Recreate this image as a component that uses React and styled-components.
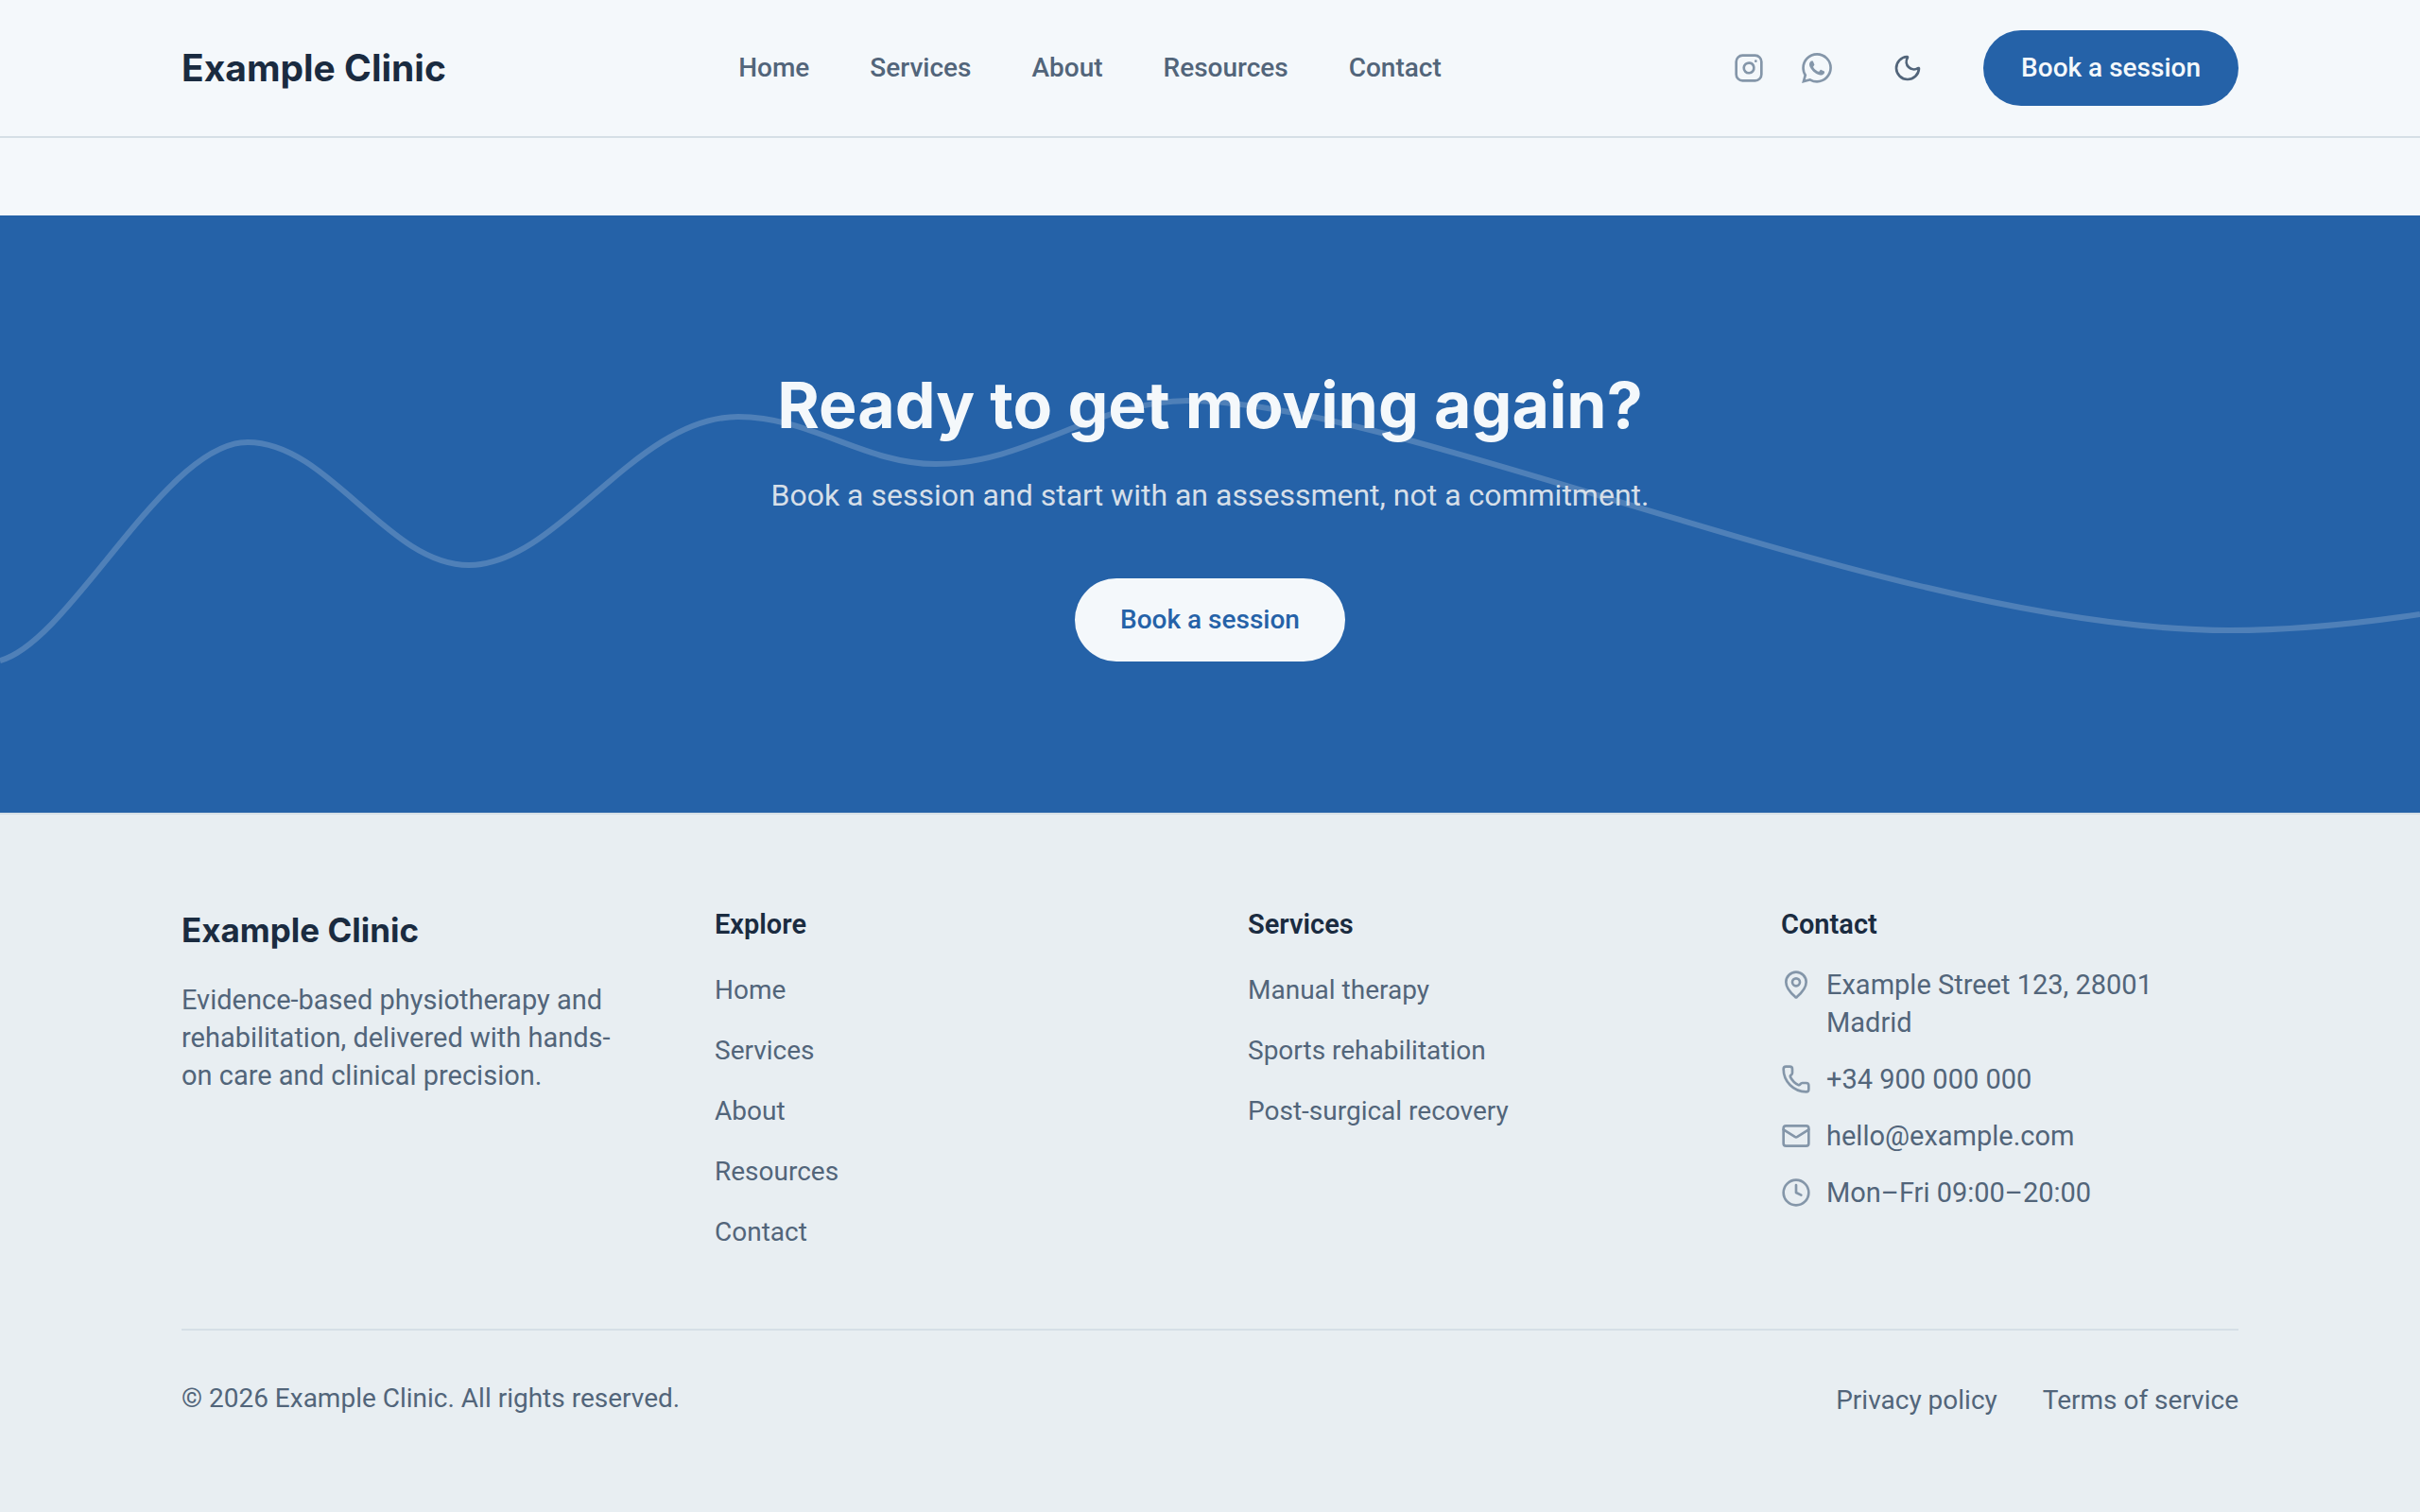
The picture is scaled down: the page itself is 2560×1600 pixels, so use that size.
import { useState } from "react";
import styled, { createGlobalStyle, ThemeProvider } from "styled-components";
import { Clock, Instagram, Mail, MapPin, Moon, Phone } from "lucide-react";
import { SiWhatsapp } from "react-icons/si";

const theme = {
  colors: {
    page: "#f4f8fb",
    footer: "#e8eef2",
    primary: "#2562a8",
    heading: "#1a2b40",
    text: "#52657a",
    icon: "#8496a9",
    line: "#d5dfe6",
  },
  fonts: {
    body: '"Roboto", "Liberation Sans", sans-serif',
    display: '"Inter", "Liberation Sans", sans-serif',
  },
};

const GlobalStyle = createGlobalStyle`
  *, *::before, *::after {
    box-sizing: border-box;
  }

  body {
    margin: 0;
    background: ${theme.colors.page};
    color: ${theme.colors.text};
    font-family: ${theme.fonts.body};
    font-size: 28px;
    line-height: 40px;
  }

  h2, h3, p, ul {
    margin: 0;
    padding: 0;
  }

  ul {
    list-style: none;
  }

  a {
    color: inherit;
    text-decoration: none;
  }
`;

const Container = styled.div`
  width: 85%;
  max-width: 2176px;
  margin: 0 auto;
`;

const Header = styled.header`
  border-bottom: 2px solid ${(props) => props.theme.colors.line};
`;

const HeaderRow = styled(Container)`
  display: flex;
  justify-content: space-between;
  align-items: center;
  padding: 32px 0;
`;

const Brand = styled.a`
  display: block;
  color: ${(props) => props.theme.colors.heading};
  font-family: ${(props) => props.theme.fonts.display};
  font-size: ${(props) => (props.$small ? 35 : 39)}px;
  font-weight: 700;
  line-height: 52px;
`;

const Nav = styled.nav`
  display: flex;
  gap: 64px;
  font-weight: 500;
`;

const Actions = styled.div`
  display: flex;
  align-items: center;
  gap: 64px;
`;

const Socials = styled.div`
  display: flex;
  gap: 40px;
  color: ${(props) => props.theme.colors.icon};

  a {
    display: flex;
  }
`;

const ThemeToggle = styled.button`
  display: flex;
  padding: 0;
  border: none;
  background: none;
  color: ${(props) => props.theme.colors.text};
  cursor: pointer;
`;

const BookButton = styled.button`
  padding: ${(props) => (props.$light ? "24px 48px" : "20px 40px")};
  border: none;
  border-radius: 999px;
  background: ${(props) =>
    props.$light ? props.theme.colors.page : props.theme.colors.primary};
  color: ${(props) =>
    props.$light ? props.theme.colors.primary : props.theme.colors.page};
  font-family: inherit;
  font-size: 28px;
  font-weight: 500;
  line-height: 40px;
  cursor: pointer;
`;

const Main = styled.main`
  padding-top: 82px;
`;

const Cta = styled.section`
  position: relative;
  padding: 160px 0;
  background: ${(props) => props.theme.colors.primary};
  color: ${(props) => props.theme.colors.page};
`;

const Wave = styled.svg`
  position: absolute;
  inset: 0;
  width: 100%;
  height: 100%;
  fill: none;
  stroke: ${(props) => props.theme.colors.page};
  stroke-width: 6;
  opacity: 0.2;
`;

const CtaContent = styled(Container)`
  position: relative;
  display: flex;
  flex-direction: column;
  align-items: center;
  text-align: center;
`;

const CtaTitle = styled.h2`
  margin-bottom: 32px;
  font-family: ${(props) => props.theme.fonts.display};
  font-size: 68px;
  font-weight: 700;
  line-height: 80px;
`;

const CtaText = styled.p`
  margin-bottom: 64px;
  color: #d6dfe8;
  font-size: 32px;
  line-height: 48px;
`;

const Footer = styled.footer`
  border-top: 2px solid ${(props) => props.theme.colors.line};
  background: ${(props) => props.theme.colors.footer};
  padding: 96px 0 92px;
`;

const FooterGrid = styled(Container)`
  display: grid;
  grid-template-columns: repeat(4, 1fr);
  gap: 80px;
`;

const About = styled.p`
  max-width: 480px;
  margin-top: 28px;
  font-size: 29px;
`;

const ColumnTitle = styled.h3`
  margin-bottom: 24px;
  color: ${(props) => props.theme.colors.heading};
  font-size: 29px;
  font-weight: 600;
`;

const LinkList = styled.ul`
  display: grid;
  gap: 12px;

  a {
    display: inline-block;
    padding: 6px 0;
    vertical-align: top;
  }
`;

const ContactList = styled.ul`
  display: grid;
  gap: 20px;
  font-size: 29px;
`;

const ContactItem = styled.li`
  display: flex;
  gap: 16px;

  svg {
    flex: none;
    margin-top: 4px;
    color: ${(props) => props.theme.colors.icon};
  }

  span {
    max-width: 400px;
  }
`;

const FooterBottom = styled(Container)`
  display: flex;
  justify-content: space-between;
  margin-top: 76px;
  padding-top: 48px;
  border-top: 2px solid ${(props) => props.theme.colors.line};
`;

const Copyright = styled.p`
  line-height: 48px;
`;

const Legal = styled.nav`
  display: flex;
  gap: 48px;
  line-height: 52px;
`;

const pages = ["Home", "Services", "About", "Resources", "Contact"];

const services = [
  "Manual therapy",
  "Sports rehabilitation",
  "Post-surgical recovery",
];

const contacts = [
  { icon: MapPin, text: "Example Street 123, 28001 Madrid" },
  { icon: Phone, text: "+34 900 000 000", href: "tel:+34900000000" },
  { icon: Mail, text: "hello@example.com", href: "mailto:hello@example.com" },
  { icon: Clock, text: "Mon–Fri 09:00–20:00" },
];

const slug = (label) => `#${label.toLowerCase().replace(/ /g, "-")}`;

const FooterLinks = ({ title, items }) => (
  <div>
    <ColumnTitle>{title}</ColumnTitle>
    <LinkList>
      {items.map((item) => (
        <li key={item}>
          <a href={slug(item)}>{item}</a>
        </li>
      ))}
    </LinkList>
  </div>
);

const App = () => {
  const [dark, setDark] = useState(false);

  return (
    <ThemeProvider theme={theme}>
      <GlobalStyle />
      <Header>
        <HeaderRow>
          <Brand href="#home">Example Clinic</Brand>
          <Nav aria-label="Main">
            {pages.map((page) => (
              <a key={page} href={slug(page)}>
                {page}
              </a>
            ))}
          </Nav>
          <Actions>
            <Socials>
              <a href="#instagram" aria-label="Instagram">
                <Instagram size={32} />
              </a>
              <a href="#whatsapp" aria-label="WhatsApp">
                <SiWhatsapp size={32} />
              </a>
            </Socials>
            <ThemeToggle
              aria-label="Dark mode"
              aria-pressed={dark}
              onClick={() => setDark(!dark)}
            >
              <Moon size={32} />
            </ThemeToggle>
            <BookButton>Book a session</BookButton>
          </Actions>
        </HeaderRow>
      </Header>

      <Main>
        <Cta>
          <Wave
            viewBox="0 0 2560 632"
            preserveAspectRatio="none"
            aria-hidden="true"
          >
            <path d="M0 471C75 451 174 240 262 240C348 240 410 370 496 370C591 370 671 213 781 213C858 213 914 263 990 263C1088 263 1159 196 1257 196C1487 196 2006 439 2358 439C2430 439 2500 431 2560 422" />
          </Wave>
          <CtaContent>
            <CtaTitle>Ready to get moving again?</CtaTitle>
            <CtaText>
              Book a session and start with an assessment, not a commitment.
            </CtaText>
            <BookButton $light>Book a session</BookButton>
          </CtaContent>
        </Cta>
      </Main>

      <Footer>
        <FooterGrid>
          <div>
            <Brand href="#home" $small>
              Example Clinic
            </Brand>
            <About>
              Evidence-based physiotherapy and rehabilitation, delivered with
              hands-on care and clinical precision.
            </About>
          </div>
          <FooterLinks title="Explore" items={pages} />
          <FooterLinks title="Services" items={services} />
          <div>
            <ColumnTitle>Contact</ColumnTitle>
            <ContactList>
              {contacts.map(({ icon: Icon, text, href }) => (
                <ContactItem key={text}>
                  <Icon size={32} aria-hidden="true" />
                  <span>{href ? <a href={href}>{text}</a> : text}</span>
                </ContactItem>
              ))}
            </ContactList>
          </div>
        </FooterGrid>
        <FooterBottom>
          <Copyright>© 2026 Example Clinic. All rights reserved.</Copyright>
          <Legal aria-label="Legal">
            <a href="#privacy">Privacy policy</a>
            <a href="#terms">Terms of service</a>
          </Legal>
        </FooterBottom>
      </Footer>
    </ThemeProvider>
  );
};

export default App;
